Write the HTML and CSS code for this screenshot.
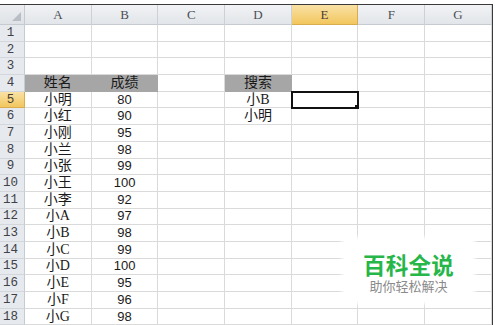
FILE: index.html
```html
<!DOCTYPE html>
<html lang="zh">
<head>
<meta charset="utf-8">
<link rel="stylesheet" href="styles.css">
</head>
<body>
<div class="page">
<div class="sheet">
  <div class="corner"></div><div class="ch">A</div><div class="ch">B</div><div class="ch">C</div><div class="ch">D</div><div class="ch sel">E</div><div class="ch">F</div><div class="ch">G</div>

  <div class="rh">1</div><div class="c"></div><div class="c"></div><div class="c"></div><div class="c"></div><div class="c"></div><div class="c"></div><div class="c"></div>
  <div class="rh">2</div><div class="c"></div><div class="c"></div><div class="c"></div><div class="c"></div><div class="c"></div><div class="c"></div><div class="c"></div>
  <div class="rh">3</div><div class="c"></div><div class="c"></div><div class="c"></div><div class="c"></div><div class="c"></div><div class="c"></div><div class="c"></div>
  <div class="rh">4</div><div class="c fill name">姓名</div><div class="c fill name">成绩</div><div class="c"></div><div class="c fill name">搜索</div><div class="c"></div><div class="c"></div><div class="c"></div>
  <div class="rh sel">5</div><div class="c name">小明</div><div class="c num">80</div><div class="c"></div><div class="c name">小B</div><div class="c active"></div><div class="c"></div><div class="c"></div>
  <div class="rh">6</div><div class="c name">小红</div><div class="c num">90</div><div class="c"></div><div class="c name">小明</div><div class="c"></div><div class="c"></div><div class="c"></div>
  <div class="rh">7</div><div class="c name">小刚</div><div class="c num">95</div><div class="c"></div><div class="c"></div><div class="c"></div><div class="c"></div><div class="c"></div>
  <div class="rh">8</div><div class="c name">小兰</div><div class="c num">98</div><div class="c"></div><div class="c"></div><div class="c"></div><div class="c"></div><div class="c"></div>
  <div class="rh">9</div><div class="c name">小张</div><div class="c num">99</div><div class="c"></div><div class="c"></div><div class="c"></div><div class="c"></div><div class="c"></div>
  <div class="rh">10</div><div class="c name">小王</div><div class="c num">100</div><div class="c"></div><div class="c"></div><div class="c"></div><div class="c"></div><div class="c"></div>
  <div class="rh">11</div><div class="c name">小李</div><div class="c num">92</div><div class="c"></div><div class="c"></div><div class="c"></div><div class="c"></div><div class="c"></div>
  <div class="rh">12</div><div class="c name">小A</div><div class="c num">97</div><div class="c"></div><div class="c"></div><div class="c"></div><div class="c"></div><div class="c"></div>
  <div class="rh">13</div><div class="c name">小B</div><div class="c num">98</div><div class="c"></div><div class="c"></div><div class="c"></div><div class="c"></div><div class="c"></div>
  <div class="rh">14</div><div class="c name">小C</div><div class="c num">99</div><div class="c"></div><div class="c"></div><div class="c"></div><div class="c"></div><div class="c"></div>
  <div class="rh">15</div><div class="c name">小D</div><div class="c num">100</div><div class="c"></div><div class="c"></div><div class="c"></div><div class="c"></div><div class="c"></div>
  <div class="rh">16</div><div class="c name">小E</div><div class="c num">95</div><div class="c"></div><div class="c"></div><div class="c"></div><div class="c"></div><div class="c"></div>
  <div class="rh">17</div><div class="c name">小F</div><div class="c num">96</div><div class="c"></div><div class="c"></div><div class="c"></div><div class="c"></div><div class="c"></div>
  <div class="rh">18</div><div class="c name">小G</div><div class="c num">98</div><div class="c"></div><div class="c"></div><div class="c"></div><div class="c"></div><div class="c"></div>

  <div class="mark">
    <div class="mark-title">百科全说</div>
    <div class="mark-sub">助你轻松解决</div>
  </div>
</div>
</div>
</body>
</html>
```
FILE: styles.css
```css
html, body {
  margin: 0;
  padding: 0;
  background: #ffffff;
  overflow: hidden;
}
.page {
  width: 495px;
  height: 325px;
  padding-top: 4px;
  box-sizing: border-box;
  overflow: hidden;
}
.sheet {
  position: relative;
  width: 493px;
  box-sizing: border-box;
  border-top: 1px solid #3a3a3a;
  border-right: 1px solid #3a3a3a;
  display: grid;
  grid-template-columns: 25px repeat(6, 66.7px) 66.8px;
  grid-template-rows: 20px repeat(18, 16.7px);
  background: #fff;
}
.corner, .ch, .rh, .c {
  box-sizing: border-box;
  display: flex;
  align-items: center;
  justify-content: center;
  overflow: hidden;
  white-space: nowrap;
}
.corner {
  position: relative;
  background: linear-gradient(#eceef1, #dfe2e6);
  border-right: 1px solid #c6cbd2;
  border-bottom: 1px solid #c6cbd2;
}
.corner::after {
  content: "";
  position: absolute;
  right: 3px;
  bottom: 3px;
  width: 0;
  height: 0;
  border-left: 9px solid transparent;
  border-bottom: 9px solid #b9bec6;
}
.ch {
  background: linear-gradient(#f1f3f5, #e2e5e9);
  border-right: 1px solid #cdd1d7;
  border-bottom: 1px solid #c6cbd2;
  font-family: "Liberation Serif", serif;
  font-size: 13px;
  color: #4a4e55;
}
.rh {
  background: #e6e9ed;
  border-right: 1px solid #c6cbd2;
  border-bottom: 1px solid #d3d7dc;
  font-family: "Liberation Mono", monospace;
  font-size: 12.5px;
  color: #3e4248;
  padding-right: 3px;
}
.ch.sel, .rh.sel {
  background: linear-gradient(#f9e2a6, #f2c65e);
  border-color: #d9ad4e;
  color: #4a4030;
}
.c {
  border-right: 1px solid #dadada;
  border-bottom: 1px solid #dadada;
  font-size: 14px;
  color: #1a1a1a;
  line-height: 16px;
}
.name {
  font-family: "Liberation Serif", "Noto Sans CJK SC", serif;
}
.num {
  font-family: "Liberation Sans", "Noto Sans CJK SC", sans-serif;
  font-size: 13px;
}
.fill {
  background: #a6a6a6;
  border-color: #a6a6a6;
  color: #1a1a1a;
}
.active {
  position: relative;
  outline: 2.5px solid #111;
  outline-offset: -1.5px;
  z-index: 2;
}
.active::after {
  content: "";
  position: absolute;
  right: -3px;
  bottom: -3px;
  width: 4px;
  height: 4px;
  background: #111;
  border: 1px solid #fff;
}
.mark {
  position: absolute;
  left: 345px;
  top: 235px;
  width: 127px;
  height: 61px;
  box-sizing: border-box;
  padding-top: 11px;
  background: #fff;
  box-shadow: 0 0 4px 3px #fff;
  display: flex;
  flex-direction: column;
  align-items: center;
  font-family: "Noto Sans CJK SC", sans-serif;
  z-index: 3;
}
.mark-title {
  font-size: 22.5px;
  font-weight: 700;
  color: #27b648;
  line-height: 26px;
  height: 26px;
  letter-spacing: 0.3px;
}
.mark-sub {
  font-size: 13px;
  color: #8a8a8a;
  line-height: 18px;
  height: 18px;
}
```
